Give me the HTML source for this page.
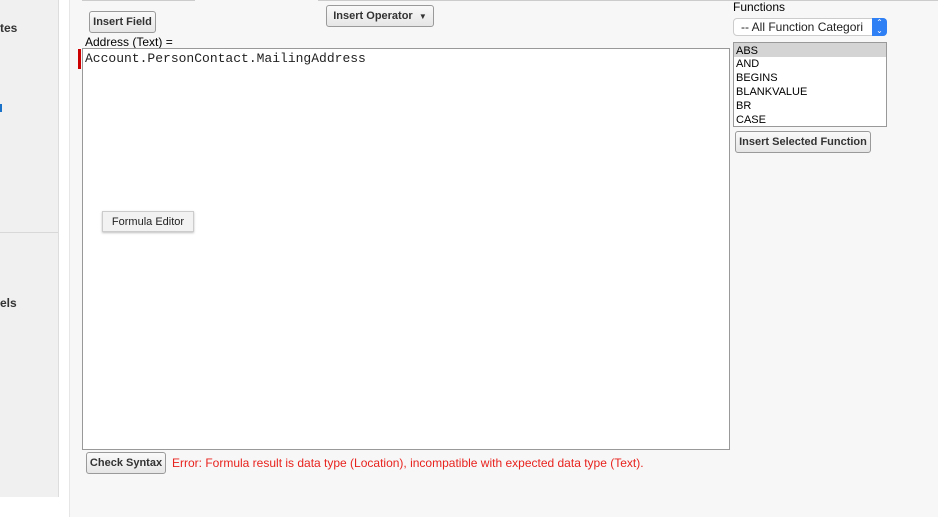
<!DOCTYPE html>
<html><head><style>
body{margin:0;width:938px;height:517px;background:#f7f7f7;font-family:"Liberation Sans",Arial,sans-serif;position:relative;overflow:hidden}
.abs{position:absolute}
.btn{position:absolute;background:linear-gradient(#fafafa,#e6e6e6);border:1px solid #9a9a9a;border-radius:3px;font-size:11px;font-weight:bold;color:#333;box-sizing:border-box;text-align:center}
</style></head><body>
<div class="abs" style="left:0;top:0;width:58px;height:497px;background:#f0f0f0;border-right:1px solid #ddd"></div>
<div class="abs" style="left:0;top:232px;width:58px;height:1px;background:#d8d8d8"></div>
<div class="abs" style="left:59px;top:0;width:10px;height:517px;background:#fff;border-right:1px solid #e6e6e6"></div>
<div class="abs" style="left:0;top:497px;width:59px;height:20px;background:#fff"></div>
<div class="abs" style="left:0;top:21px;font-size:12px;font-weight:bold;color:#333">tes</div>
<div class="abs" style="left:0;top:104px;width:2px;height:8px;background:#1a73c8"></div>
<div class="abs" style="left:0;top:296px;font-size:12px;font-weight:bold;color:#333">els</div>
<div class="abs" style="left:82px;top:0;width:113px;height:1px;background:#ccc"></div>
<div class="abs" style="left:318px;top:0;width:620px;height:1px;background:#ccc"></div>
<div class="btn" style="left:89px;top:11px;width:67px;height:22px;line-height:21px">Insert Field</div>
<div class="btn" style="left:326px;top:5px;width:108px;height:22px;line-height:21px">Insert Operator &nbsp;<span style="font-size:8px">▼</span></div>
<div class="abs" style="left:85px;top:35px;font-size:12px;color:#000">Address (Text) =</div>
<div class="abs" style="left:82px;top:48px;width:648px;height:402px;background:#fff;border:1px solid #999;box-sizing:border-box"></div>
<div class="abs" style="left:78px;top:49px;width:3px;height:20px;background:#c00"></div>
<div class="abs" style="left:85px;top:51px;font-family:'Liberation Mono',monospace;font-size:13px;color:#222">Account.PersonContact.MailingAddress</div>
<div class="abs" style="left:102px;top:211px;width:92px;height:21px;background:#f2f2f2;border:1px solid #ccc;box-shadow:0 1px 2px rgba(0,0,0,.25);font-size:11px;line-height:20px;text-align:center;color:#222;box-sizing:border-box">Formula Editor</div>
<div class="btn" style="left:86px;top:452px;width:80px;height:22px;line-height:21px">Check Syntax</div>
<div class="abs" style="left:172px;top:456px;font-size:12px;color:#e8231e">Error: Formula result is data type (Location), incompatible with expected data type (Text).</div>
<div class="abs" style="left:733px;top:0;font-size:12px;color:#000">Functions</div>
<div class="abs" style="left:733px;top:18px;width:154px;height:18px;background:#fff;border:1px solid #ccc;border-radius:4px;box-sizing:border-box;font-size:12px;line-height:17px;padding-left:7px;color:#222;overflow:hidden">-- All Function Categori</div>
<div class="abs" style="left:872px;top:18px;width:15px;height:18px;background:#2f7ff5;border-radius:0 4px 4px 0;color:#fff;font-size:8px;text-align:center;line-height:8px;padding-top:1px;box-sizing:border-box">⌃<br>⌄</div>
<div class="abs" style="left:733px;top:42px;width:154px;height:85px;background:#fff;border:1px solid #999;box-sizing:border-box;font-size:11px;line-height:14px;color:#000">
<div style="background:#d4d4d4;padding-left:2px;padding-top:1px;height:13px">ABS</div><div style="padding-left:2px">AND</div><div style="padding-left:2px">BEGINS</div><div style="padding-left:2px">BLANKVALUE</div><div style="padding-left:2px">BR</div><div style="padding-left:2px">CASE</div></div>
<div class="btn" style="left:735px;top:131px;width:136px;height:22px;line-height:21px">Insert Selected Function</div>
</body></html>
